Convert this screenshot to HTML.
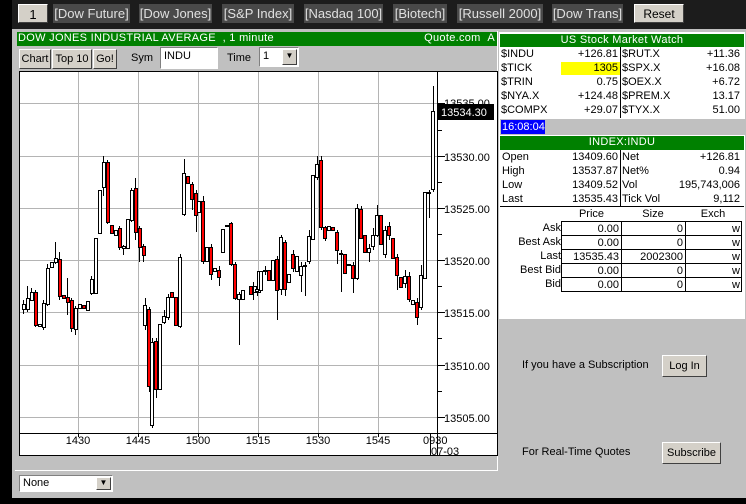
<!DOCTYPE html>
<html><head><meta charset="utf-8"><style>
*{margin:0;padding:0;box-sizing:border-box}
body{width:746px;height:504px;background:#000;position:relative;overflow:hidden;font-family:"Liberation Sans",Arial,sans-serif;font-size:11px;color:#000}
.a{position:absolute}
.top{left:12px;top:0;width:734px;height:29px;background:#1c1c1c}
.tb{position:absolute;top:4px;height:19px;background:#494949;color:#e0e0e0;font-size:13px;line-height:19px;text-align:center;white-space:nowrap}
.lb{background:#d4d0c8;color:#000;border:1px solid;border-color:#fff #404040 #404040 #fff}
.gray{left:12px;top:29px;width:734px;height:469px;background:#c0c0c0}
.green{background:#008000;color:#fff;font-size:11px;line-height:13px;height:14px}
.btn{position:absolute;background:#d4d0c8;border:1px solid;border-color:#fff #404040 #404040 #fff;font-size:11px;text-align:center;line-height:18px}
.tbl{position:absolute;background:#fff;font-size:11px}
.row{position:absolute;height:14px;line-height:14px}
.r{text-align:right}
</style></head><body>
<div class="a top"></div>
<div class="tb lb" style="left:18px;width:30px">1</div>
<div class="tb" style="left:53px;width:77px">[Dow Future]</div>
<div class="tb" style="left:139px;width:73px">[Dow Jones]</div>
<div class="tb" style="left:222px;width:72px">[S&amp;P Index]</div>
<div class="tb" style="left:304px;width:79px">[Nasdaq 100]</div>
<div class="tb" style="left:393px;width:54px">[Biotech]</div>
<div class="tb" style="left:457px;width:86px">[Russell 2000]</div>
<div class="tb" style="left:552px;width:71px">[Dow Trans]</div>
<div class="tb lb" style="left:634px;width:50px;font-size:12px">Reset</div>

<div class="a gray"></div>
<!-- left chart panel -->
<div class="a" style="left:15px;top:31px;width:483px;height:440px;border-right:1px solid #fff;border-bottom:1px solid #fff"></div>
<div class="a green" style="left:17px;top:32px;width:480px;padding-left:1px;letter-spacing:0.3px">DOW JONES INDUSTRIAL AVERAGE &nbsp;, 1 minute<span style="position:absolute;right:2px">Quote.com &nbsp;A</span></div>
<div class="btn" style="left:19px;top:49px;width:32px;height:20px">Chart</div>
<div class="btn" style="left:52px;top:49px;width:40px;height:20px">Top 10</div>
<div class="btn" style="left:93px;top:49px;width:24px;height:20px">Go!</div>
<div class="a" style="left:131px;top:52px;font-size:11px">Sym</div>
<div class="a" style="left:160px;top:47px;width:58px;height:22px;background:#fff;border:1px solid;border-color:#808080 #fff #fff #808080;padding:2px 3px;font-size:11px">INDU</div>
<div class="a" style="left:227px;top:52px">Time</div>
<div class="a" style="left:259px;top:47px;width:40px;height:20px;background:#fff;border:1px solid;border-color:#808080 #fff #fff #808080;padding:2px 3px">1<div class="btn" style="left:22px;top:1px;width:15px;height:16px;line-height:12px;font-size:8px">▼</div></div>

<svg class="a" style="left:0;top:0" width="746" height="504">
<rect x="19.5" y="71.5" width="478" height="384" fill="#fff" stroke="#000"/>
<g stroke="#b4b4b4" stroke-width="1">
<line x1="20" x2="437" y1="103.5" y2="103.5"/><line x1="20" x2="437" y1="156.5" y2="156.5"/><line x1="20" x2="437" y1="208.5" y2="208.5"/><line x1="20" x2="437" y1="260.5" y2="260.5"/><line x1="20" x2="437" y1="312.5" y2="312.5"/><line x1="20" x2="437" y1="365.5" y2="365.5"/><line x1="20" x2="437" y1="417.5" y2="417.5"/>
<line x1="78.5" x2="78.5" y1="72" y2="433"/><line x1="138.5" x2="138.5" y1="72" y2="433"/><line x1="198.5" x2="198.5" y1="72" y2="433"/><line x1="258.5" x2="258.5" y1="72" y2="433"/><line x1="318.5" x2="318.5" y1="72" y2="433"/><line x1="378.5" x2="378.5" y1="72" y2="433"/>
</g>
<line x1="19" x2="497" y1="433.5" y2="433.5" stroke="#000"/>
<line x1="437.5" x2="437.5" y1="72" y2="455" stroke="#000"/>
<g stroke="#000" stroke-width="1">
<line x1="438" x2="442" y1="130.5" y2="130.5"/><line x1="438" x2="442" y1="182.5" y2="182.5"/><line x1="438" x2="442" y1="234.5" y2="234.5"/><line x1="438" x2="442" y1="286.5" y2="286.5"/><line x1="438" x2="442" y1="338.5" y2="338.5"/><line x1="438" x2="442" y1="391.5" y2="391.5"/>
<line x1="438" x2="445" y1="103.5" y2="103.5"/><line x1="438" x2="445" y1="156.5" y2="156.5"/><line x1="438" x2="445" y1="208.5" y2="208.5"/><line x1="438" x2="445" y1="260.5" y2="260.5"/><line x1="438" x2="445" y1="312.5" y2="312.5"/><line x1="438" x2="445" y1="365.5" y2="365.5"/><line x1="438" x2="445" y1="417.5" y2="417.5"/>
<line x1="78.5" x2="78.5" y1="433" y2="437"/><line x1="138.5" x2="138.5" y1="433" y2="437"/><line x1="198.5" x2="198.5" y1="433" y2="437"/><line x1="258.5" x2="258.5" y1="433" y2="437"/><line x1="318.5" x2="318.5" y1="433" y2="437"/><line x1="378.5" x2="378.5" y1="433" y2="437"/><line x1="430.5" x2="430.5" y1="433" y2="455"/>
</g>
<g font-size="11" font-family="Liberation Sans,Arial,sans-serif" fill="#000">
<text x="444" y="107">13535.00</text><text x="444" y="161">13530.00</text><text x="444" y="213">13525.00</text><text x="444" y="265">13520.00</text><text x="444" y="317">13515.00</text><text x="444" y="370">13510.00</text><text x="444" y="422">13505.00</text>
<text x="78" y="444" text-anchor="middle">1430</text><text x="138" y="444" text-anchor="middle">1445</text><text x="198" y="444" text-anchor="middle">1500</text><text x="258" y="444" text-anchor="middle">1515</text><text x="318" y="444" text-anchor="middle">1530</text><text x="378" y="444" text-anchor="middle">1545</text><text x="423" y="444">0930</text><text x="431" y="455">07-03</text>
</g>
<rect x="437" y="104" width="57" height="16" fill="#000"/>
<text x="441" y="116" font-size="11" fill="#fff" font-family="Liberation Sans,Arial,sans-serif">13534.30</text>
<g stroke="#000" stroke-width="1">
<path d="M23.5 300V314M27.5 286V312M31.5 288V300M35.5 290V327M43.5 300V330M47.5 264V306M55.5 242V264M59.5 252V300M67.5 278V315M71.5 298V332M75.5 306V335M91.5 276V295M103.5 156V196M107.5 160V224M119.5 226V250M123.5 245V255M131.5 188V222M135.5 178V240M139.5 226V262M143.5 244V262M145.5 298V330M149.5 307V392M152.5 338V428M156.5 338V398M164.5 310V324M168.5 294V320M180.5 254V328M184.5 159V216M192.5 182V210M196.5 190V232M203.5 196V264M211.5 244V280M219.5 266V286M231.5 222V266M235.5 262V300M239.5 292V345M253.5 282V300M257.5 284V296M265.5 266V275M277.5 256V320M281.5 235V295M285.5 240V296M293.5 250V272M301.5 262V292M305.5 262V296M309.5 230V264M317.5 156V180M321.5 156V230M325.5 226V241M337.5 230V264M341.5 250V292M353.5 262V293M357.5 204V280M361.5 206V238M369.5 244V262M373.5 228V250M377.5 205V237M385.5 226V258M389.5 222V240M397.5 254V290M405.5 270V288M409.5 272V302M417.5 298V325M421.5 265V310M429.5 190V218M433.5 86V192"/>
</g>
<g stroke="#000" stroke-width="1" fill="#fff">
<rect x="22.5" y="304.5" width="3" height="5"/><rect x="26.5" y="298.5" width="3" height="11"/><rect x="30.5" y="292.5" width="3" height="8"/><rect x="38.5" y="324.5" width="3" height="2"/><rect x="42.5" y="303.5" width="3" height="24"/><rect x="46.5" y="268.5" width="3" height="36"/><rect x="50.5" y="262.5" width="3" height="5"/><rect x="54.5" y="258.5" width="3" height="4"/><rect x="74.5" y="308.5" width="3" height="21"/><rect x="78.5" y="304.5" width="3" height="4"/><rect x="86.5" y="301.5" width="3" height="9"/><rect x="90.5" y="279.5" width="3" height="14"/><rect x="94.5" y="238.5" width="3" height="55"/><rect x="98.5" y="190.5" width="3" height="43"/><rect x="102.5" y="162.5" width="3" height="25"/><rect x="114.5" y="230.5" width="3" height="5"/><rect x="122.5" y="246.5" width="3" height="2"/><rect x="126.5" y="219.5" width="3" height="29"/><rect x="130.5" y="190.5" width="3" height="30"/>
<rect x="143.5" y="305.5" width="3" height="20"/><rect x="150.5" y="342.5" width="3" height="83"/><rect x="158.5" y="324.5" width="3" height="65"/><rect x="162.5" y="316.5" width="3" height="6"/><rect x="166.5" y="297.5" width="3" height="20"/><rect x="178.5" y="257.5" width="3" height="69"/><rect x="182.5" y="173.5" width="3" height="41"/><rect x="197.5" y="201.5" width="3" height="11"/><rect x="205.5" y="247.5" width="3" height="14"/><rect x="213.5" y="268.5" width="3" height="3"/><rect x="221.5" y="229.5" width="3" height="23"/><rect x="225.5" y="225.5" width="3" height="1"/><rect x="237.5" y="294.5" width="3" height="5"/><rect x="241.5" y="290.5" width="3" height="9"/><rect x="253.5" y="286.5" width="3" height="6"/><rect x="257.5" y="271.5" width="3" height="21"/>
<rect x="255.5" y="289.5" width="3" height="2"/><rect x="259.5" y="271.5" width="3" height="19"/><rect x="263.5" y="270.5" width="3" height="1"/><rect x="271.5" y="260.5" width="3" height="20"/><rect x="279.5" y="237.5" width="3" height="52"/><rect x="287.5" y="274.5" width="3" height="8"/><rect x="295.5" y="256.5" width="3" height="15"/><rect x="299.5" y="266.5" width="3" height="9"/><rect x="303.5" y="265.5" width="3" height="1"/><rect x="307.5" y="236.5" width="3" height="25"/><rect x="311.5" y="175.5" width="3" height="64"/><rect x="315.5" y="164.5" width="3" height="13"/><rect x="327.5" y="226.5" width="3" height="4"/><rect x="339.5" y="253.5" width="3" height="1"/><rect x="347.5" y="264.5" width="3" height="1"/><rect x="355.5" y="208.5" width="3" height="70"/><rect x="367.5" y="248.5" width="3" height="4"/><rect x="371.5" y="235.5" width="3" height="11"/><rect x="375.5" y="215.5" width="3" height="20"/><rect x="383.5" y="230.5" width="3" height="24"/><rect x="403.5" y="276.5" width="3" height="7"/><rect x="411.5" y="300.5" width="3" height="4"/><rect x="419.5" y="275.5" width="3" height="32"/><rect x="423.5" y="192.5" width="3" height="86"/><rect x="427.5" y="192.5" width="3" height="1"/><rect x="431.5" y="111.5" width="3" height="78"/>
</g>
<g stroke="#000" stroke-width="1" fill="#f00">
<rect x="34.5" y="292.5" width="3" height="33"/><rect x="58.5" y="259.5" width="3" height="37"/><rect x="62.5" y="295.5" width="3" height="3"/><rect x="66.5" y="297.5" width="3" height="5"/><rect x="70.5" y="300.5" width="3" height="28"/><rect x="82.5" y="305.5" width="3" height="3"/><rect x="106.5" y="162.5" width="3" height="60"/><rect x="110.5" y="225.5" width="3" height="8"/><rect x="118.5" y="228.5" width="3" height="19"/><rect x="134.5" y="188.5" width="3" height="44"/><rect x="138.5" y="228.5" width="3" height="19"/><rect x="142.5" y="246.5" width="3" height="9"/>
<rect x="147.5" y="309.5" width="3" height="77"/><rect x="154.5" y="341.5" width="3" height="48"/><rect x="170.5" y="292.5" width="3" height="5"/><rect x="174.5" y="297.5" width="3" height="28"/><rect x="186.5" y="176.5" width="3" height="7"/><rect x="190.5" y="184.5" width="3" height="15"/><rect x="194.5" y="193.5" width="3" height="22"/><rect x="201.5" y="201.5" width="3" height="60"/><rect x="209.5" y="247.5" width="3" height="27"/><rect x="217.5" y="270.5" width="3" height="7"/><rect x="229.5" y="223.5" width="3" height="41"/><rect x="233.5" y="264.5" width="3" height="34"/><rect x="249.5" y="286.5" width="3" height="8"/>
<rect x="267.5" y="270.5" width="3" height="10"/><rect x="275.5" y="259.5" width="3" height="31"/><rect x="283.5" y="242.5" width="3" height="47"/><rect x="291.5" y="254.5" width="3" height="14"/><rect x="319.5" y="160.5" width="3" height="67"/><rect x="323.5" y="227.5" width="3" height="11"/><rect x="331.5" y="227.5" width="3" height="3"/><rect x="335.5" y="232.5" width="3" height="18"/><rect x="343.5" y="254.5" width="3" height="19"/><rect x="351.5" y="265.5" width="3" height="13"/><rect x="359.5" y="209.5" width="3" height="29"/><rect x="363.5" y="235.5" width="3" height="17"/><rect x="379.5" y="215.5" width="3" height="29"/><rect x="387.5" y="226.5" width="3" height="9"/><rect x="391.5" y="238.5" width="3" height="20"/><rect x="395.5" y="257.5" width="3" height="18"/><rect x="399.5" y="277.5" width="3" height="10"/><rect x="407.5" y="276.5" width="3" height="23"/><rect x="415.5" y="302.5" width="3" height="15"/>
</g>
</svg>

<div class="a" style="left:19px;top:475px;width:94px;height:17px;background:#fff;border:1px solid;border-color:#808080 #fff #fff #808080;padding:1px 3px;font-size:11px">None<div class="btn" style="left:76px;top:1px;width:15px;height:13px;line-height:10px;font-size:8px">▼</div></div>

<!-- right panel -->
<div class="a" style="left:499px;top:32px;width:246px;height:287px;border:1px solid #fff;border-right:none;background:#fff"></div>
<div class="a green" style="left:500px;top:34px;width:244px;text-align:center;letter-spacing:0.3px">US Stock Market Watch</div>
<div class="tbl" style="left:500px;top:47px;width:244px;height:71px">
<div class="a" style="left:120px;top:0;width:1px;height:71px;background:#000"></div>
<div class="a" style="left:61px;top:15px;width:59px;height:13px;background:#ffff00"></div>
<div class="row" style="left:1px;top:0">$INDU<br>$TICK<br>$TRIN<br>$NYA.X<br>$COMPX</div>
<div class="row r" style="right:126px;top:0">+126.81<br>1305<br>0.75<br>+124.48<br>+29.07</div>
<div class="row" style="left:122px;top:0">$RUT.X<br>$SPX.X<br>$OEX.X<br>$PREM.X<br>$TYX.X</div>
<div class="row r" style="right:4px;top:0">+11.36<br>+16.08<br>+6.72<br>13.17<br>51.00</div>
</div>
<div class="a" style="left:500px;top:119px;width:246px;height:16px;background:#c0c0c0"></div>
<div class="a" style="left:501px;top:120px;width:44px;height:14px;background:#0000ff;color:#fff;line-height:14px;padding-left:1px">16:08:04</div>
<div class="a green" style="left:500px;top:136px;width:244px;text-align:center;letter-spacing:0.3px">INDEX:INDU</div>
<div class="tbl" style="left:500px;top:150px;width:244px;height:57px;border-bottom:1px solid #000">
<div class="a" style="left:120px;top:0;width:1px;height:57px;background:#000"></div>
<div class="row" style="left:2px;top:0">Open<br>High<br>Low<br>Last</div>
<div class="row r" style="right:126px;top:0">13409.60<br>13537.87<br>13409.52<br>13535.43</div>
<div class="row" style="left:122px;top:0">Net<br>Net%<br>Vol<br>Tick Vol</div>
<div class="row r" style="right:4px;top:0">+126.81<br>0.94<br>195,743,006<br>9,112</div>
</div>
<div class="a" style="left:562px;top:208px;width:59px;text-align:center">Price</div>
<div class="a" style="left:621px;top:208px;width:64px;text-align:center">Size</div>
<div class="a" style="left:685px;top:208px;width:56px;text-align:center">Exch</div>
<div class="a r" style="left:500px;top:221px;width:61px;line-height:14px">Ask<br>Best Ask<br>Last<br>Best Bid<br>Bid</div>
<svg class="a" style="left:561px;top:221px" width="182" height="72">
<g stroke="#000" fill="none"><rect x="0.5" y="0.5" width="180" height="70"/>
<path d="M0 14.5H181M0 28.5H181M0 42.5H181M0 56.5H181M60.5 0V71M124.5 0V71"/></g>
<g font-size="11" font-family="Liberation Sans,Arial,sans-serif" text-anchor="end">
<text x="58" y="11">0.00</text><text x="58" y="25">0.00</text><text x="58" y="39">13535.43</text><text x="58" y="53">0.00</text><text x="58" y="67">0.00</text>
<text x="122" y="11">0</text><text x="122" y="25">0</text><text x="122" y="39">2002300</text><text x="122" y="53">0</text><text x="122" y="67">0</text>
<text x="179" y="11">w</text><text x="179" y="25">w</text><text x="179" y="39">w</text><text x="179" y="53">w</text><text x="179" y="67">w</text></g>
</svg>
<div class="a" style="left:522px;top:359px">If you have a Subscription</div>
<div class="btn" style="left:662px;top:355px;width:45px;height:22px;line-height:20px">Log In</div>
<div class="a" style="left:522px;top:446px">For Real-Time Quotes</div>
<div class="btn" style="left:662px;top:442px;width:59px;height:22px;line-height:20px">Subscribe</div>
</body></html>
